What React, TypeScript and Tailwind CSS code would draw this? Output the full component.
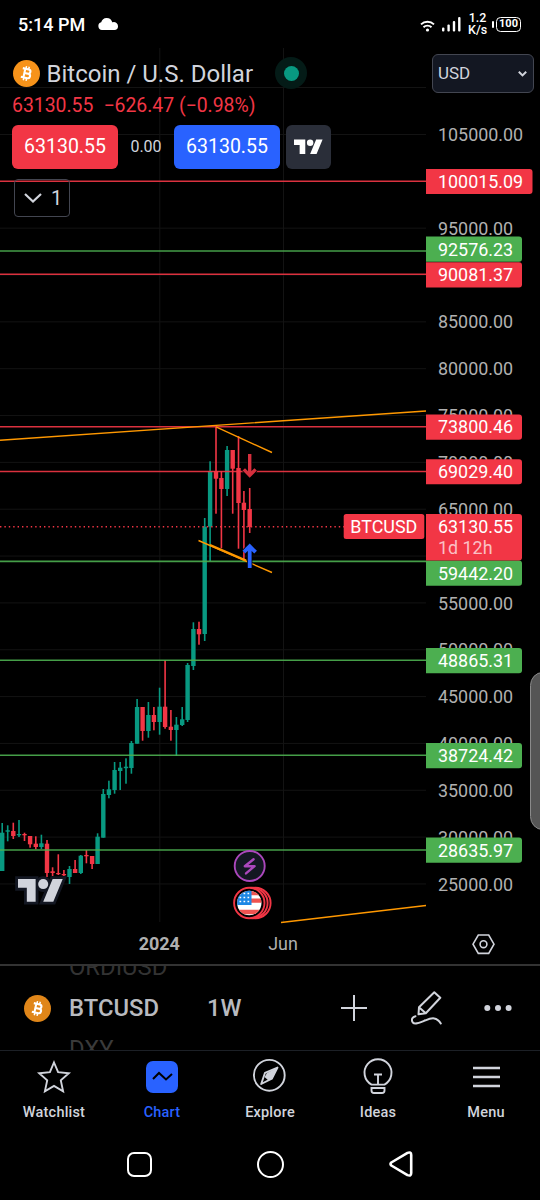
import type { ReactNode } from 'react';

const RED = '#f23645';
const GREEN = '#4caf50';
const UP = '#089981';
const ORANGE = '#ff9800';

const PLOT_WIDTH = 426;
const TOP_PRICE = 105000;
const TOP_Y = 86.5;
const PX_PER_UNIT = 0.009368;

const priceToY = (price: number) => TOP_Y + (TOP_PRICE - price) * PX_PER_UNIT;

const TICKS = Array.from({ length: 17 }, (_, i) => 105000 - i * 5000);
// Ticks hidden completely by a level badge
const HIDDEN_TICKS = [100000, 90000, 60000];

interface Level {
  price: number;
  color: string;
  width?: number;
  badgeY?: number;
}

const LEVELS: Level[] = [
  { price: 100015.09, color: RED },
  { price: 92576.23, color: GREEN, badgeY: 201.2 },
  { price: 90081.37, color: RED, badgeY: 226.8 },
  { price: 73800.46, color: RED },
  { price: 69029.4, color: RED },
  { price: 59442.2, color: GREEN, width: 1.8, badgeY: 525.2 },
  { price: 48865.31, color: GREEN },
  { price: 38724.42, color: GREEN },
  { price: 28635.97, color: GREEN },
];

// [x, wick top, body top, body bottom, wick bottom, rising]
type Candle = [number, number, number, number, number, 0 | 1];

const CANDLES: Candle[] = [
  [2.2, 775, 784.7, 823, 823, 1],
  [7.7, 777.3, 782.3, 783.7, 793.3, 1],
  [13.3, 774.7, 783, 788, 791, 0],
  [19, 772, 786, 787.3, 789, 1],
  [24.5, 784.7, 786, 787.3, 793, 0],
  [30.1, 788, 788, 796.3, 799.7, 0],
  [35.8, 788.3, 795.7, 799, 801.3, 0],
  [41.4, 786.7, 795.3, 799, 801, 1],
  [47, 792, 795.7, 825, 829, 0],
  [52.6, 819.3, 823.3, 825, 828, 0],
  [58.3, 806.3, 825, 826.2, 827, 0],
  [63.9, 822, 826, 827.3, 828, 0],
  [69.5, 818, 821, 829, 836, 1],
  [75.1, 812, 821, 825, 825, 0],
  [80.8, 807, 807.7, 825, 826, 1],
  [86.4, 802, 807, 808.3, 815.3, 0],
  [92.1, 808, 808, 816, 821, 0],
  [97.6, 785.3, 788.7, 816, 816, 1],
  [103.3, 741, 746, 789.7, 789.7, 1],
  [108.9, 732.7, 741.3, 747, 750.3, 1],
  [114.6, 714, 722, 742, 745.7, 1],
  [120.2, 714, 719.7, 723, 742, 1],
  [126, 710.3, 718.7, 720.2, 735.7, 1],
  [131.4, 693, 695, 720, 725.7, 1],
  [137.1, 651, 659, 695.7, 695.7, 1],
  [142.6, 659, 659, 683, 692.7, 0],
  [148.4, 654, 667, 683, 689.7, 1],
  [153.9, 659, 667, 674, 682.3, 0],
  [159.6, 639.7, 658.7, 674, 686.7, 1],
  [165.1, 612, 658.7, 679, 680.7, 0],
  [170.9, 662, 678.7, 682, 692.7, 0],
  [176.4, 669, 676.7, 682, 708, 1],
  [182.2, 659, 671.3, 677, 678, 1],
  [187.6, 615, 617, 672, 674, 1],
  [193.4, 574.3, 581, 618, 622, 1],
  [199, 573.7, 581, 586.3, 596.7, 0],
  [204.7, 470, 478.7, 586, 593, 1],
  [210.1, 413.3, 423, 478.7, 513, 1],
  [216, 378.7, 423, 430.7, 465.7, 0],
  [221.4, 423, 430, 441, 500.3, 0],
  [227.1, 398, 402, 441, 448, 1],
  [232.7, 402, 402, 420.7, 465.7, 0],
  [238.5, 388, 420, 455, 500.7, 0],
  [243.9, 443, 454.7, 462, 511, 0],
  [249.7, 440, 461, 479, 485, 0],
];

function BitcoinIcon({ color }: { color: string }) {
  return (
    <svg width="27" height="27" viewBox="0 0 27 27" fill="none" className="shrink-0">
      <circle cx="13.5" cy="13.5" r="13.5" fill={color} />
      <g transform="rotate(13 13.5 13.5)" stroke="#fff" strokeWidth="2.1">
        <path d="M8.7 9.1h6.1a2.15 2.15 0 0 1 0 4.3h-3.3M8.7 17.9h6.6a2.25 2.25 0 0 0 0-4.5h-3.8M11.3 9v9" />
        <path d="M11.9 6.3v3M14.7 6.3v3M11.9 17.8v3M14.7 17.8v3" strokeWidth="1.5" />
      </g>
    </svg>
  );
}

function TradingViewMark() {
  return (
    <>
      <path d="M14 22H7V11H0V4h14v18zM28 22h-8l7.5-18h8L28 22z" />
      <circle cx="20" cy="8" r="4" />
    </>
  );
}

function StatusBar() {
  return (
    <div className="flex h-12 items-center justify-between pr-[19px] pl-[18px] text-white">
      <div className="flex items-center gap-[13px]">
        <span className="text-[18px] font-medium">5:14 PM</span>
        <svg width="20" height="12" viewBox="0 0 20 12" fill="currentColor">
          <path d="M4 12a4 4 0 0 1-.8-7.8A6 6 0 0 1 8.5 0a6 6 0 0 1 5.8 4.2h.5A4.2 4.2 0 0 1 20 8.5 3.6 3.6 0 0 1 16.5 12z" />
        </svg>
      </div>
      <div className="flex items-center">
        <svg width="15" height="12" viewBox="0 0 15 12" fill="none" stroke="currentColor" strokeWidth="1.9" className="mt-[3px]">
          <path d="M1 4.4a9.3 9.3 0 0 1 13 0M3.5 7.2a5.8 5.8 0 0 1 8 0" />
          <circle cx="7.5" cy="10" r="1.6" fill="currentColor" stroke="none" />
        </svg>
        <svg width="20" height="15" viewBox="0 0 20 15" fill="currentColor" className="ml-[7px]">
          <rect x="0" y="10.5" width="2.4" height="4" rx="1" />
          <rect x="5.4" y="7.5" width="2.4" height="7" rx="1" />
          <rect x="10.8" y="4" width="2.4" height="10.5" rx="1" />
          <rect x="16.1" y="0" width="2.4" height="14.5" rx="1" />
        </svg>
        <div className="ml-[6px] w-[19px] text-center text-[12.5px] leading-[12px] font-medium">
          <div>1.2</div>
          <div>K/s</div>
        </div>
        <div className="ml-[5px] h-[7px] w-[2px] rounded-full bg-white" />
        <div className="ml-[2px] flex h-[15px] w-[25px] items-center justify-center rounded-[4.5px] border-[1.5px] border-white text-[11px] font-bold">
          100
        </div>
      </div>
    </div>
  );
}

function Badge({ y, price, color }: { y: number; price: number; color: string }) {
  const width = price >= 100000 ? 106.5 : 96;
  return (
    <g>
      <path
        d={`M${PLOT_WIDTH} ${y - 12.6}h${width - 3}a3 3 0 0 1 3 3v19.2a3 3 0 0 1 -3 3h-${width - 3}z`}
        fill={color}
      />
      <text x="438" y={y + 6.4} fill="#fff">
        {price.toFixed(2)}
      </text>
    </g>
  );
}

function PriceChart() {
  const lastY = 478.8;

  return (
    <svg
      width="540"
      height="917"
      viewBox="0 0 540 917"
      fill="none"
      fontSize="17.9"
      className="col-start-1 row-start-1"
    >
      {/* Grid */}
      <g stroke="#131313">
        {TICKS.map((t) => (
          <path key={t} d={`M0 ${priceToY(t)}H${PLOT_WIDTH}`} />
        ))}
        <path d={`M0 39.5H${PLOT_WIDTH}`} />
        <path d="M159.8 0V874M283.5 0V874" />
      </g>

      {/* Candles */}
      {CANDLES.map(([x, high, top, bottom, low, rising]) => (
        <g key={x} fill={rising ? UP : RED}>
          <rect x={x - 0.8} y={high} width="1.6" height={low - high} />
          <rect x={x - 2.2} y={top} width="4.4" height={bottom - top} />
        </g>
      ))}

      {/* Levels */}
      {LEVELS.map(({ price, color, width }) => (
        <path
          key={price}
          d={`M0 ${priceToY(price)}H${PLOT_WIDTH}`}
          stroke={color}
          strokeOpacity="0.9"
          strokeWidth={width ?? 1.5}
        />
      ))}
      <path d={`M0 ${lastY}H344`} stroke={RED} strokeWidth="1.4" strokeDasharray="1.4 3" />

      {/* Trend lines */}
      <g stroke={ORANGE} strokeWidth="1.4">
        <path d="M0 392.2L426 363M216 378.8L272 404.5M198.5 492.5L272 524.5M281 874.5L426 857.5" />
        <path d="M210 497L246 512.5" strokeWidth="2.4" />
      </g>

      {/* Trade arrows */}
      <path d="M249.7 406v21M243.8 421.4l5.9 5.9 5.9-5.9" stroke="#000" strokeWidth="4.8" />
      <path d="M249.7 406v21M243.8 421.4l5.9 5.9 5.9-5.9" stroke={RED} strokeOpacity="0.88" strokeWidth="3.4" />
      <path d="M249.7 520.5v-22M243.8 504.2l5.9-5.9 5.9 5.9" stroke="#000" strokeWidth="5.4" />
      <path d="M249.7 520v-21.5M243.8 504.2l5.9-5.9 5.9 5.9" stroke="#2962ff" strokeWidth="3.8" />

      {/* Watermark */}
      <g transform="translate(18 826) scale(1.26)">
        <g fill="#131722" stroke="#131722" strokeWidth="4.5">
          <TradingViewMark />
        </g>
        <g fill="#d1d4dc">
          <TradingViewMark />
        </g>
      </g>

      {/* Event markers */}
      <circle cx="249.7" cy="818" r="15" fill="#131722" stroke="#ab47bc" strokeWidth="1.9" />
      <path
        d="M253.6 811.2l-8.8 7h9.8l-8.6 7.2"
        stroke="#ab47bc"
        strokeWidth="2.4"
        strokeLinejoin="round"
        strokeLinecap="round"
      />
      {[255.4, 252.4, 249.3].map((cx) => (
        <circle key={cx} cx={cx} cy="855" r="15.2" fill="#000" stroke={RED} strokeWidth="1.9" />
      ))}
      <clipPath id="flag">
        <circle cx="249.3" cy="855" r="12.2" />
      </clipPath>
      <g clipPath="url(#flag)">
        <rect x="237" y="842" width="25" height="26" fill="#fff" />
        <path d="M237 845h25M237 852.6h25M237 864h25" stroke="#ef5350" strokeWidth="4.4" />
        <rect x="237" y="842" width="14.5" height="15" fill="#1e88e5" />
        <path
          d="M239.5 845.5h12M239.5 849.5h12M239.5 853.5h12"
          stroke="#fff"
          strokeWidth="1.7"
          strokeDasharray="1.7 2.3"
        />
      </g>

      {/* Price scale */}
      {TICKS.filter((t) => !HIDDEN_TICKS.includes(t)).map((t) => (
        <text key={t} x="438" y={priceToY(t) + 6.6} fill="#b0b0b0">
          {t.toFixed(2)}
        </text>
      ))}
      {LEVELS.map(({ price, color, badgeY }) => (
        <Badge key={price} y={badgeY ?? priceToY(price) + 0.3} price={price} color={color} />
      ))}

      {/* Last price */}
      <rect x="343.7" y="466" width="80.6" height="25" rx="2.5" fill={RED} />
      <text x="350.3" y="485" fill="#fff" textLength="67" lengthAdjust="spacingAndGlyphs">
        BTCUSD
      </text>
      <path d="M426 466h93a3 3 0 0 1 3 3v40.5a3 3 0 0 1 -3 3h-93z" fill={RED} />
      <text x="438" y="485.2" fill="#fff">
        63130.55
      </text>
      <text x="438" y="506" fill="#fff" fillOpacity="0.7" textLength="54.5">
        1d 12h
      </text>

      {/* Time scale */}
      <g fill="#b0b0b0" textAnchor="middle">
        <text x="159.3" y="902.2" fontWeight="700" fontSize="18">
          2024
        </text>
        <text x="283" y="902.2">
          Jun
        </text>
      </g>
      <g stroke="#d1d4dc" strokeWidth="1.6">
        <path d="M478.3 887h10.4l5.3 9.2-5.3 9.2h-10.4l-5.3-9.2z" />
        <circle cx="483.5" cy="896.2" r="3.4" />
      </g>

      {/* Edge panel handle */}
      <rect x="530.5" y="624.5" width="24" height="157" rx="13" fill="#555" stroke="#8a8a8a" />
    </svg>
  );
}

function ChartHeader() {
  return (
    <div className="z-10 col-start-1 row-start-1 flex items-start justify-between self-start pr-[6px] pl-3 text-[#d1d4dc]">
      <div className="flex flex-col pt-[9px]">
        <div className="flex h-8 items-center pl-px">
          <BitcoinIcon color="#f7931a" />
          <h1 className="ml-[6.5px] w-[208px] pt-px text-[24px] leading-8 whitespace-nowrap">Bitcoin / U.S. Dollar</h1>
          <span className="ml-[20.5px] flex size-8 items-center justify-center rounded-full bg-[#041b17]">
            <span className="size-[15px] rounded-full bg-[#089981]" />
          </span>
        </div>
        <div className="mt-px flex h-8 items-center gap-[10px] text-[19.4px] leading-8 whitespace-nowrap text-[#f23645]">
          <span>63130.55</span>
          <span>−626.47 (−0.98%)</span>
        </div>
        <div className="mt-[3px] flex h-11 items-center text-[19.5px]">
          <button className="h-11 w-[106px] rounded-md bg-[#f23645] text-white">63130.55</button>
          <span className="w-14 text-center text-base">0.00</span>
          <button className="h-11 w-[106px] rounded-md bg-[#2962ff] text-white">63130.55</button>
          <button className="ml-[6px] flex h-11 w-[45px] items-center justify-center rounded-md bg-[#2a2e39] text-white">
            <svg width="29" height="23" viewBox="0 0 36 28" fill="currentColor">
              <TradingViewMark />
            </svg>
          </button>
        </div>
        <button className="mt-[10px] ml-[2px] flex h-[38px] w-14 items-center rounded-[4px] border border-[#434651] pl-[9px] text-[20px]">
          <svg width="18" height="10" viewBox="0 0 18 10" fill="none" stroke="currentColor" strokeWidth="2.2">
            <path d="M1 1l8 7.5L17 1" />
          </svg>
          <span className="ml-[9px]">1</span>
        </button>
      </div>
      <button className="mt-[6px] flex h-[39px] w-[102px] items-center justify-between rounded-md border border-[#434651] bg-[#131722] pr-[6px] pl-[5px] text-[17px]">
        USD
        <svg width="9" height="6" viewBox="0 0 9 6" fill="none" stroke="currentColor" strokeWidth="2">
          <path d="M.8.8l3.7 3.6L8.2.8" />
        </svg>
      </button>
    </div>
  );
}

function SymbolBar() {
  return (
    <div className="flex h-[87px] items-center overflow-hidden border-t-2 border-b border-t-[#333] border-b-[#1c2026] pl-6 text-[#b8babf]">
      <BitcoinIcon color="#e08619" />
      <div className="ml-[18px] flex w-[138px] flex-col text-[23.8px] leading-[41px]">
        <span className="text-[#333]">ORDIUSD</span>
        <span className="font-medium">BTCUSD</span>
        <span className="text-[#3a3a3a]">DXY</span>
      </div>
      <span className="w-[134px] pt-px text-[23.8px] font-medium">1W</span>
      <div className="flex items-center text-[#d1d4dc]">
        <svg width="26" height="26" viewBox="0 0 26 26" fill="none" stroke="currentColor" strokeWidth="2">
          <path d="M13 0v26M0 13h26" />
        </svg>
        <svg
          width="32"
          height="34"
          viewBox="0 0 32 34"
          fill="none"
          stroke="currentColor"
          strokeWidth="2"
          strokeLinejoin="round"
          strokeLinecap="round"
          className="ml-[44px]"
        >
          <path d="M23.3 1.3l6 5.5-14.5 15.5-7.3 1 .5-7zM8.5 16.8l5.7 5" />
          <path d="M4.5 25.2C1 26 0 29 1.8 31.5c2.2 2.5 7.2 0 12.7-2.2 6.5-2.8 11.5-3.3 15.3 3.2" />
        </svg>
        <svg width="28" height="6" viewBox="0 0 28 6" fill="currentColor" className="ml-[41px]">
          <circle cx="3.3" cy="3" r="3" />
          <circle cx="14" cy="3" r="3" />
          <circle cx="24.6" cy="3" r="3" />
        </svg>
      </div>
    </div>
  );
}

function NavTab({ label, active, children }: { label: string; active?: boolean; children: ReactNode }) {
  return (
    <a className={`flex flex-1 flex-col items-center ${active ? 'text-[#2962ff]' : 'text-[#d1d4dc]'}`}>
      <svg width="36" height="37" viewBox="0 0 36 37" fill="none" stroke="currentColor" strokeWidth="1.9">
        {children}
      </svg>
      <span className="mt-2 text-[14.5px] leading-5 font-medium tracking-[0.2px]">{label}</span>
    </a>
  );
}

function BottomNav() {
  return (
    <nav className="flex h-[77px] pt-[7px]">
      <NavTab label="Watchlist">
        <path d="M18 4.5l4.1 9.7 10.7 1-8 7.2 2.3 11L18 27.9l-9.1 5.5 2.3-11-8-7.2 10.7-1z" />
      </NavTab>
      <NavTab label="Chart" active>
        <rect x="2" y="3" width="32" height="32" rx="7" fill="currentColor" stroke="none" />
        <path d="M9 21l6-6 7 6.5 6-5.5" stroke="#000" strokeWidth="2" />
      </NavTab>
      <NavTab label="Explore">
        <circle cx="17.3" cy="17.3" r="15.4" />
        <path d="M26 9l-6 12-5-6zM15 15l5 6-3.5 1.5-4-3.5z" fill="currentColor" stroke="none" />
        <path d="M25.5 9.5L13 14.8 9.2 26l10.6-5.3z" strokeLinejoin="round" />
      </NavTab>
      <NavTab label="Ideas">
        <path d="M11.5 26.6a13.5 13.5 0 1 1 13 0zM14 16.5h8M18 16.5v10" />
        <path d="M11.5 30h13v2.5A2.5 2.5 0 0 1 22 35h-8a2.5 2.5 0 0 1-2.5-2.5z" />
      </NavTab>
      <NavTab label="Menu">
        <path d="M5 10h27M5 19h27M5 28h27" strokeWidth="2.4" />
      </NavTab>
    </nav>
  );
}

function SystemNav() {
  return (
    <div className="flex h-[72px] items-center justify-between px-[127px] text-white">
      <span className="size-[25px] rounded-[7px] border-[2.5px] border-white" />
      <span className="size-[27px] rounded-full border-[2.5px] border-white" />
      <svg width="24" height="26" viewBox="0 0 24 26" fill="none" stroke="currentColor" strokeWidth="2.6" strokeLinejoin="round">
        <path d="M2.3 11.5L18.5 1.9Q22.2.5 22.2 4v18q0 3.5-3.7 2.1l-16.2-9.6q-1.5-1.5 0-3z" />
      </svg>
    </div>
  );
}

export default function App() {
  return (
    <div className="flex h-[1200px] w-[540px] flex-col overflow-hidden bg-black font-['Roboto',sans-serif]">
      <StatusBar />
      <main className="grid h-[916px] overflow-hidden">
        <PriceChart />
        <ChartHeader />
      </main>
      <SymbolBar />
      <BottomNav />
      <SystemNav />
    </div>
  );
}
